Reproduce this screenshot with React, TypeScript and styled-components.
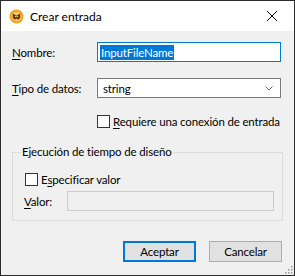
import React from "react";
import styled, { createGlobalStyle } from "styled-components";

const GlobalStyle = createGlobalStyle`
  html, body {
    margin: 0;
    padding: 0;
    background: #f0f0f0;
  }
  * {
    box-sizing: border-box;
  }
`;

const Window = styled.div`
  width: 295px;
  height: 276px;
  border: 1px solid #2b2b2b;
  background: #f0f0f0;
  display: flex;
  flex-direction: column;
  font-family: Lato, "Liberation Sans", sans-serif;
  font-size: 11.5px;
  letter-spacing: -0.15px;
  color: #000;
  white-space: nowrap;
  position: relative;
`;

const TitleBar = styled.div`
  height: 30px;
  flex-shrink: 0;
  background: #fff;
  display: flex;
  align-items: center;
  padding-left: 8px;
`;

const Title = styled.span`
  margin-left: 6px;
  flex: 1;
  font-size: 12px;
  letter-spacing: 0;
`;

const CloseButton = styled.div`
  width: 46px;
  height: 30px;
  display: flex;
  align-items: center;
  justify-content: center;
  margin-right: -1px;
`;

const Body = styled.div`
  flex: 1;
  display: flex;
  flex-direction: column;
  padding: 11px 11px 0 11px;
`;

const Row = styled.div<{ $gap?: number }>`
  display: flex;
  align-items: center;
  height: 20px;
  margin-right: 2px;
  margin-bottom: ${(p) => p.$gap ?? 0}px;
`;

const Label = styled.label<{ $width: number }>`
  width: ${(p) => p.$width}px;
  flex-shrink: 0;
`;

const Key = styled.span`
  text-decoration: underline;
  text-underline-offset: 2px;
`;

const TextBox = styled.div<{ $disabled?: boolean; $focused?: boolean }>`
  flex: 1;
  height: 20px;
  border: 1px solid
    ${(p) => (p.$focused ? "#0078d7" : p.$disabled ? "#cccccc" : "#7a7a7a")};
  background: ${(p) => (p.$disabled ? "#f0f0f0" : "#fff")};
  display: flex;
  align-items: center;
  padding-left: 2px;
`;

const Selected = styled.span`
  background: #0078d7;
  color: #fff;
  line-height: 15px;
  padding: 0 1px;
`;

const SelectBox = styled(TextBox)`
  padding-left: 5px;
  padding-right: 7px;
  justify-content: space-between;
`;

const CheckRow = styled.div<{ $indent: number }>`
  display: flex;
  align-items: center;
  height: 13px;
  padding-left: ${(p) => p.$indent}px;
`;

const Box = styled.span`
  width: 13px;
  height: 13px;
  border: 1px solid #333;
  background: #fff;
  margin-right: 3px;
  flex-shrink: 0;
`;

const Group = styled.fieldset`
  margin: 17px 0 0 0;
  padding: 14px 8px 0 11px;
  border: 1px solid #dcdcdc;
  height: 76px;
  min-width: 0;
  display: flex;
  flex-direction: column;
`;

const Legend = styled.legend`
  padding: 0 1px;
  margin-left: -3px;
  font-size: 11.5px;
  line-height: 14px;
`;

const ValueRow = styled(Row)`
  margin: 5px 0 0 0;
`;

const Buttons = styled.div`
  display: flex;
  justify-content: flex-end;
  gap: 13px;
  margin-top: 20px;
  margin-right: 1px;
`;

const Button = styled.div<{ $primary?: boolean }>`
  width: 73px;
  height: 21px;
  display: flex;
  align-items: center;
  justify-content: center;
  background: #e1e1e1;
  border: ${(p) => (p.$primary ? "2px solid #0078d7" : "1px solid #adadad")};
`;

const Grip = styled.svg`
  position: absolute;
  right: 1px;
  bottom: 1px;
`;

function AppIcon() {
  return (
    <svg width="15" height="15" viewBox="0 0 15 15">
      <circle cx="7.5" cy="7.5" r="7" fill="#f7a21b" />
      <circle cx="7.5" cy="7.5" r="4.8" fill="#ffc766" />
      <path
        d="M3.8 4.4 L7.5 6.8 L11.2 4.4 L11.2 8.6 L9.3 10.8 L7.5 9.4 L5.7 10.8 L3.8 8.6 Z"
        fill="#5a3300"
      />
      <path d="M5.8 6.4 L7.5 7.6 L9.2 6.4 L9.2 8.3 L7.5 8 L5.8 8.3 Z" fill="#ffc766" />
    </svg>
  );
}

export default function App() {
  return (
    <>
      <GlobalStyle />
      <Window>
        <TitleBar>
          <AppIcon />
          <Title>Crear entrada</Title>
          <CloseButton>
            <svg width="10" height="10" viewBox="0 0 10 10">
              <path d="M0 0 L10 10 M10 0 L0 10" stroke="#000" strokeWidth="1" />
            </svg>
          </CloseButton>
        </TitleBar>
        <Body>
          <Row $gap={16}>
            <Label $width={85}>
              <Key>N</Key>ombre:
            </Label>
            <TextBox $focused>
              <Selected>InputFileName</Selected>
            </TextBox>
          </Row>
          <Row $gap={17}>
            <Label $width={85}>
              <Key>T</Key>ipo de datos:
            </Label>
            <SelectBox>
              <span>string</span>
              <svg width="8" height="5" viewBox="0 0 8 5">
                <path d="M0.5 0.5 L4 4 L7.5 0.5" stroke="#6d6d6d" fill="none" />
              </svg>
            </SelectBox>
          </Row>
          <CheckRow $indent={85}>
            <Box />
            <span>
              <Key>R</Key>equiere una conexión de entrada
            </span>
          </CheckRow>
          <Group>
            <Legend>Ejecución de tiempo de diseño</Legend>
            <CheckRow $indent={1}>
              <Box />
              <span>
                E<Key>s</Key>pecificar valor
              </span>
            </CheckRow>
            <ValueRow>
              <Label $width={43}>
                <Key>V</Key>alor:
              </Label>
              <TextBox $disabled />
            </ValueRow>
          </Group>
          <Buttons>
            <Button $primary>Aceptar</Button>
            <Button>Cancelar</Button>
          </Buttons>
        </Body>
        <Grip width="10" height="10" viewBox="0 0 10 10">
          {[
            [8, 2], [8, 5], [5, 5], [8, 8], [5, 8], [2, 8],
          ].map(([x, y], i) => (
            <rect key={i} x={x} y={y} width="1.5" height="1.5" fill="#999" />
          ))}
        </Grip>
      </Window>
    </>
  );
}
